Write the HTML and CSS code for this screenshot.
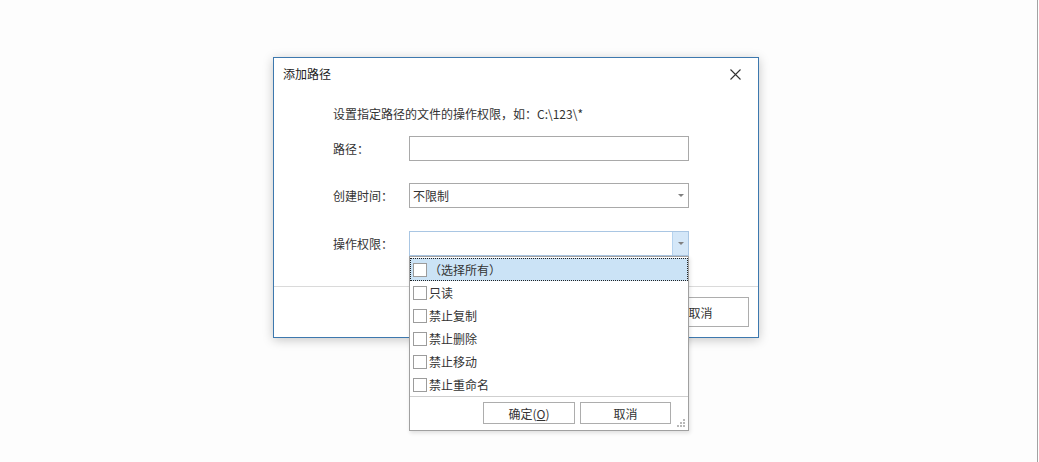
FILE: index.html
```html
<!DOCTYPE html>
<html lang="zh-CN">
<head>
    <meta charset="UTF-8">
    <title>添加路径</title>
    <link rel="stylesheet" href="styles.css">
</head>
<body>
    <div class="screen">
        <div class="dialog">
            <div class="title-bar">
                <span class="title">添加路径</span>
                <svg class="close" width="11" height="11" viewBox="0 0 11 11">
                    <path d="M0.5 0.5 L10.5 10.5 M10.5 0.5 L0.5 10.5" stroke="#333" stroke-width="1.1" fill="none"/>
                </svg>
            </div>
            <div class="dialog-body">
                <p class="desc">设置指定路径的文件的操作权限，如：C:\123\*</p>
                <div class="row row-first">
                    <label class="label">路径：</label>
                    <div class="field"></div>
                </div>
                <div class="row">
                    <label class="label">创建时间：</label>
                    <div class="field combo">
                        <span class="combo-text">不限制</span>
                        <span class="arrow"></span>
                    </div>
                </div>
                <div class="row row-last">
                    <label class="label">操作权限：</label>
                    <div class="field combo open">
                        <span class="combo-text"></span>
                        <span class="drop-btn"><span class="arrow"></span></span>
                    </div>
                </div>
            </div>
            <div class="dialog-footer">
                <button class="btn btn-cancel">取消</button>
            </div>
        </div>

        <div class="popup">
            <ul class="options">
                <li class="option selected"><span class="check"></span><span class="opt-text">（选择所有）</span></li>
                <li class="option"><span class="check"></span><span class="opt-text">只读</span></li>
                <li class="option"><span class="check"></span><span class="opt-text">禁止复制</span></li>
                <li class="option"><span class="check"></span><span class="opt-text">禁止删除</span></li>
                <li class="option"><span class="check"></span><span class="opt-text">禁止移动</span></li>
                <li class="option"><span class="check"></span><span class="opt-text">禁止重命名</span></li>
            </ul>
            <div class="popup-footer">
                <button class="btn btn-small">确定(<u>O</u>)</button>
                <button class="btn btn-small">取消</button>
                <svg class="grip" width="10" height="10" viewBox="0 0 10 10">
                    <rect x="7" y="1" width="2" height="2" fill="#b8b8b8"/>
                    <rect x="4" y="4" width="2" height="2" fill="#b8b8b8"/>
                    <rect x="7" y="4" width="2" height="2" fill="#b8b8b8"/>
                    <rect x="1" y="7" width="2" height="2" fill="#b8b8b8"/>
                    <rect x="4" y="7" width="2" height="2" fill="#b8b8b8"/>
                    <rect x="7" y="7" width="2" height="2" fill="#b8b8b8"/>
                </svg>
            </div>
        </div>
    </div>
</body>
</html>
```

FILE: styles.css
```css
body {
    margin: 0;
    background: #fff;
    font-family: "Noto Sans CJK SC", "Microsoft YaHei", sans-serif;
    font-size: 12px;
    color: #333;
}
.screen {
    position: relative;
    width: 1037px;
    height: 462px;
    background: #fdfdfd;
    border-right: 1px solid #a3a3a3;
    overflow: hidden;
}
.dialog {
    position: absolute;
    left: 273px;
    top: 57px;
    width: 484px;
    background: #fff;
    border: 1px solid #3d78ae;
    box-shadow: 0 2px 10px rgba(0, 0, 0, 0.22);
}
.title-bar {
    height: 32px;
    display: flex;
    align-items: center;
    justify-content: space-between;
    padding: 0 17px 0 9px;
}
.title {
    font-size: 12px;
    color: #222;
    line-height: 32px;
}
.close {
    display: block;
}
.dialog-body {
    padding: 15px 0 0 59px;
    height: 181px;
}
.desc {
    margin: 0;
    line-height: 18px;
}
.row {
    display: flex;
    align-items: center;
    margin-top: 22px;
}
.row-first {
    margin-top: 13px;
}
.row-last {
    margin-top: 23px;
}
.label {
    width: 76px;
    line-height: 25px;
}
.field {
    box-sizing: border-box;
    width: 280px;
    height: 25px;
    border: 1px solid #a9a9a9;
    background: #fff;
    position: relative;
}
.combo {
    display: flex;
    align-items: center;
}
.combo-text {
    flex: 1;
    padding-left: 3px;
    line-height: 23px;
}
.arrow {
    width: 0;
    height: 0;
    border-left: 3px solid transparent;
    border-right: 3px solid transparent;
    border-top: 3px solid #808080;
    margin-right: 4px;
}
.drop-btn {
    width: 15px;
    height: 23px;
    background: #d4e7f8;
    border-left: 1px solid #b5d3ef;
    display: flex;
    align-items: center;
    justify-content: center;
}
.drop-btn .arrow {
    margin: 0;
}
.open {
    border-color: #a9c6e3;
}
.dialog-footer {
    border-top: 1px solid #dadada;
    padding: 10px 9px 10px 0;
    display: flex;
    justify-content: flex-end;
}
.btn {
    font-family: inherit;
    font-size: 12px;
    color: #333;
    background: #fff;
    border: 1px solid #adadad;
    padding: 0;
    margin: 0;
}
.btn-cancel {
    width: 97px;
    height: 30px;
}
.popup {
    position: absolute;
    left: 409px;
    top: 256px;
    width: 278px;
    background: #fff;
    border: 1px solid #a0a0a0;
    box-shadow: 1px 2px 4px rgba(0, 0, 0, 0.12);
}
.options {
    list-style: none;
    margin: 0;
    padding: 1px 0 0 0;
}
.option {
    height: 23px;
    display: flex;
    align-items: center;
    padding-left: 3px;
    box-sizing: border-box;
}
.option.selected {
    background: #cbe3f6;
    outline: 1px dotted #222;
    outline-offset: -1px;
}
.check {
    box-sizing: border-box;
    width: 14px;
    height: 14px;
    border: 1px solid #9c9c9c;
    background: #fff;
    margin-right: 2px;
}
.popup-footer {
    border-top: 1px solid #cfcfcf;
    height: 34px;
    display: flex;
    align-items: flex-start;
    justify-content: flex-end;
    padding: 5px 0 0 0;
    box-sizing: border-box;
    position: relative;
}
.btn-small {
    width: 92px;
    height: 22px;
    margin-left: 5px;
}
.btn-small:last-of-type {
    margin-right: 17px;
    width: 91px;
}
.grip {
    position: absolute;
    right: 2px;
    bottom: 2px;
}
```
